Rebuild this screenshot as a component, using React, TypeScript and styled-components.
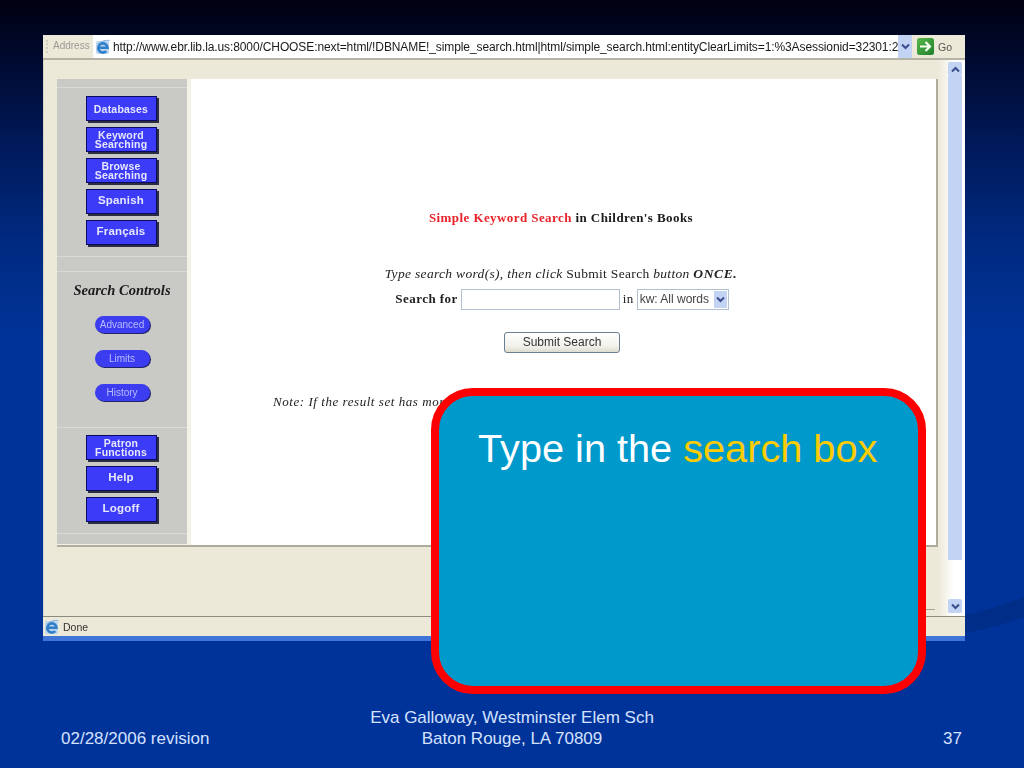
import React from 'react';
import styled, { createGlobalStyle } from 'styled-components';

const GlobalStyle = createGlobalStyle`
    html, body {
        margin: 0;
        padding: 0;
        background: #003399;
    }
`;

const Slide = styled.div`
    position: relative;
    width: 1024px;
    height: 768px;
    overflow: hidden;
    padding-top: 35px;
    box-sizing: border-box;
    background: linear-gradient(180deg, #000010 0px, #000a30 60px, #001a5c 150px, #002a80 240px, #003399 340px);
    font-family: 'Liberation Sans', Arial, sans-serif;
`;

const Swoosh = styled.svg`
    position: absolute;
    left: 965px;
    top: 590px;
`;

const Browser = styled.div`
    position: relative;
    display: flex;
    flex-direction: column;
    width: 922px;
    height: 606px;
    margin-left: 43px;
    filter: blur(0.35px);
`;

const AddressBar = styled.div`
    display: flex;
    align-items: stretch;
    height: 25px;
    background: #ece9d8;
    border-bottom: 2px solid #b5b3a6;
    box-sizing: border-box;
`;

const Grip = styled.div`
    width: 2px;
    margin: 5px 0 5px 3px;
    border-left: 2px dotted #d0cebf;
`;

const AddressLabel = styled.div`
    width: 43px;
    padding-left: 3px;
    box-sizing: border-box;
    font-size: 10px;
    line-height: 21px;
    color: #9a9a96;
`;

const UrlField = styled.div`
    display: flex;
    align-items: center;
    gap: 2px;
    width: 805px;
    padding-left: 2px;
    box-sizing: border-box;
    background: #ffffff;
    overflow: hidden;
`;

const UrlText = styled.span`
    flex: 1;
    overflow: hidden;
    white-space: nowrap;
    font-size: 12px;
    letter-spacing: -0.1px;
    color: #1a1a1a;
`;

const Arrow = styled.div<{ $w: number; $h: number }>`
    display: flex;
    align-items: center;
    justify-content: center;
    flex: none;
    width: ${p => p.$w}px;
    height: ${p => p.$h}px;
    background: #c3d3f4;
`;

const GoBlock = styled.div`
    display: flex;
    align-items: center;
    gap: 4px;
    padding-left: 5px;
    font-size: 10.5px;
    color: #55554f;
`;

const PageArea = styled.div`
    flex: 1;
    display: flex;
    background: #ece9d8;
    border-left: 1px solid #d8d5c4;
    min-height: 0;
`;

const FrameColumn = styled.div`
    display: flex;
    flex-direction: column;
    width: 894px;
    padding: 19px 0 6px 13px;
    box-sizing: border-box;
`;

const FrameRow = styled.div`
    display: flex;
    width: 881px;
    height: 468px;
    background: #f4f2e6;
    border-right: 2px solid #aeac9d;
    border-bottom: 2px solid #aeac9d;
    box-sizing: border-box;
`;

const BottomLine = styled.div`
    align-self: flex-end;
    width: 30px;
    height: 1px;
    margin: auto 3px 0 0;
    background: #a5a396;
`;

const NavPanel = styled.div`
    display: flex;
    flex-direction: column;
    width: 130px;
    height: 465px;
    background: #c9c9c5;
`;

const NavSection = styled.div<{ $h: number; $pad?: number }>`
    display: flex;
    flex-direction: column;
    align-items: center;
    flex: none;
    height: ${p => p.$h}px;
    padding-top: ${p => p.$pad || 0}px;
    box-sizing: border-box;
    border-bottom: 1px solid #dadad6;
`;

const NavButton = styled.div<{ $two?: boolean; $small?: boolean }>`
    display: flex;
    align-items: center;
    justify-content: center;
    flex: none;
    width: 71px;
    height: 25px;
    margin-bottom: 6px;
    margin-right: 2px;
    padding-bottom: ${p => (p.$two || p.$small ? 0 : 3)}px;
    text-align: center;
    box-sizing: border-box;
    background: #3c3cf8;
    border: 1px solid #0a0a60;
    box-shadow: 2px 2px 0 #2d2d40;
    color: #e6e6ff;
    font-weight: bold;
    font-size: ${p => (p.$two ? 10.5 : p.$small ? 10.5 : 11.5)}px;
    line-height: ${p => (p.$two ? 9 : 14)}px;
    letter-spacing: 0.2px;
`;

const ControlsTitle = styled.div`
    margin: 0 0 18px 0;
    font-family: 'Liberation Serif', 'Times New Roman', serif;
    font-weight: bold;
    font-style: italic;
    font-size: 14.5px;
    line-height: 16px;
    color: #1c1c1c;
`;

const Pill = styled.div`
    width: 55px;
    height: 17px;
    margin-bottom: 17px;
    border-radius: 9px;
    background: #3c3cf0;
    box-shadow: 1px 1px 0 #23236a;
    color: #b8bcff;
    font-size: 10px;
    line-height: 17px;
    text-align: center;
`;

const MainFrame = styled.div`
    flex: 1;
    margin-left: 4px;
    background: #ffffff;
    font-family: 'Liberation Serif', 'Times New Roman', serif;
    color: #222222;
`;

const Heading = styled.div`
    padding: 131px 5px 0 0;
    text-align: center;
    font-weight: bold;
    font-size: 13px;
    line-height: 16px;
    letter-spacing: 0.42px;
    color: #1a1a1a;
`;

const Red = styled.span`
    color: #e8232a;
`;

const Hint = styled.div`
    margin-top: 40px;
    padding-right: 5px;
    text-align: center;
    font-style: italic;
    font-size: 13.5px;
    line-height: 16px;
    letter-spacing: 0.32px;
    em {
        font-style: normal;
    }
    b {
        letter-spacing: 0.6px;
    }
`;

const SearchRow = styled.div`
    display: flex;
    align-items: center;
    justify-content: center;
    height: 22px;
    margin-top: 6px;
    padding-right: 3px;
    font-size: 13px;
    letter-spacing: 0.4px;
`;

const SearchLabel = styled.b`
    margin-right: 3px;
    letter-spacing: 0.45px;
`;

const SearchInput = styled.div`
    width: 159px;
    height: 21px;
    margin-right: 3px;
    box-sizing: border-box;
    border: 1px solid #b4c0d0;
`;

const SelectBox = styled.div`
    display: flex;
    align-items: center;
    justify-content: space-between;
    width: 92px;
    height: 21px;
    margin-left: 3px;
    padding: 0 1px 0 2px;
    box-sizing: border-box;
    border: 1px solid #b4c0d0;
    font-family: 'Liberation Sans', Arial, sans-serif;
    font-size: 12px;
    letter-spacing: 0;
    color: #444444;
`;

const SubmitButton = styled.div`
    width: 116px;
    height: 21px;
    margin: 22px 0 0 313px;
    box-sizing: border-box;
    border: 1px solid #6b7f92;
    border-radius: 3px;
    background: linear-gradient(180deg, #ffffff, #f2f1ea 70%, #dedcd0);
    font-family: 'Liberation Sans', Arial, sans-serif;
    font-size: 12px;
    line-height: 19px;
    text-align: center;
    color: #333333;
`;

const Note = styled.div`
    margin: 41px 0 0 82px;
    font-style: italic;
    font-size: 13px;
    line-height: 16px;
    letter-spacing: 0.55px;
    white-space: nowrap;
`;

const ScrollColumn = styled.div`
    flex: 1;
    display: flex;
    flex-direction: column;
    align-items: flex-start;
    padding: 2px 3px 3px 0;
    background: linear-gradient(90deg, #ece9d8 0, #ffffff 16px);
`;

const ScrollTrack = styled.div`
    width: 14px;
    height: 484px;
    margin: 0 0 auto 10px;
    background: #c3d3f4;
`;

const ScrollButton = styled(Arrow)`
    margin-left: 10px;
    border-radius: 2px;
`;

const StatusBar = styled.div`
    display: flex;
    align-items: center;
    gap: 3px;
    height: 20px;
    padding-left: 1px;
    background: #ece9d8;
    border-top: 1px solid #8e8c80;
    box-sizing: border-box;
    font-size: 10.5px;
    color: #33332e;
`;

const BlueStrip = styled.div`
    height: 5px;
    background: #3f74d8;
`;

const Callout = styled.div`
    position: absolute;
    left: 431px;
    top: 388px;
    width: 495px;
    height: 306px;
    padding: 31px 0 0 39px;
    box-sizing: border-box;
    border: 8px solid #ff0000;
    border-radius: 42px;
    background: #0099cc;
    color: #ffffff;
    font-size: 39.7px;
    line-height: 42px;
    white-space: nowrap;
`;

const Yellow = styled.span`
    color: #ffcc00;
`;

const Footer = styled.div`
    display: flex;
    align-items: flex-end;
    margin-top: 66px;
    color: #d5e2ff;
    font-size: 17px;
    line-height: 21px;
`;

const FooterDate = styled.div`
    width: 309px;
    padding-left: 61px;
    box-sizing: border-box;
`;

const FooterCenter = styled.div`
    width: 406px;
    text-align: center;
`;

const FooterPage = styled.div`
    flex: 1;
    padding-left: 228px;
`;

const IeIcon = ({ size }: { size: number }) => (
    <svg width={size} height={size} viewBox="0 0 16 16">
        <rect x="1" y="2" width="13" height="13" rx="2" fill="#bcd4ee" />
        <path d="M3.5 8.8h9a4.6 4.6 0 1 0-1.3 3.4" stroke="#2f7fc8" strokeWidth="2.6" fill="none" />
        <path d="M3 5C6 2 11 0.8 14.5 1.5" stroke="#7fb2e2" strokeWidth="1" fill="none" />
    </svg>
);

const Chevron = ({ up }: { up?: boolean }) => (
    <svg width="9" height="7" viewBox="0 0 9 7">
        <path
            d={up ? 'M1 5.5l3.5-3.5L8 5.5' : 'M1 1.5L4.5 5 8 1.5'}
            stroke="#3a4d8c"
            strokeWidth="2"
            fill="none"
        />
    </svg>
);

const GoIcon = () => (
    <svg width="17" height="17" viewBox="0 0 17 17">
        <defs>
            <linearGradient id="goFill" x1="0" y1="0" x2="1" y2="1">
                <stop offset="0" stopColor="#58b848" />
                <stop offset="1" stopColor="#1f7f2c" />
            </linearGradient>
        </defs>
        <rect width="17" height="17" rx="2.5" fill="url(#goFill)" />
        <path d="M3 8.5h9.5M8.5 4l4.5 4.5L8.5 13" stroke="#f4fff0" strokeWidth="2.2" fill="none" />
    </svg>
);

const url =
    'http://www.ebr.lib.la.us:8000/CHOOSE:next=html/!DBNAME!_simple_search.html|html/simple_search.html:entityClearLimits=1:%3Asessionid=32301:2';

const App = () => (
    <Slide>
        <GlobalStyle />
        <Swoosh width="59" height="50" viewBox="0 0 59 50">
            <path d="M0 25C20 21 40 14 59 7V27C40 33 20 40 0 43Z" fill="#002d88" />
        </Swoosh>
        <Browser>
            <AddressBar>
                <Grip />
                <AddressLabel>Address</AddressLabel>
                <UrlField>
                    <IeIcon size={16} />
                    <UrlText>{url}</UrlText>
                </UrlField>
                <Arrow $w={14} $h={23}>
                    <Chevron />
                </Arrow>
                <GoBlock>
                    <GoIcon />
                    Go
                </GoBlock>
            </AddressBar>
            <PageArea>
                <FrameColumn>
                    <FrameRow>
                        <NavPanel>
                            <NavSection $h={9} />
                            <NavSection $h={169} $pad={8}>
                                <NavButton $small>Databases</NavButton>
                                <NavButton $two>
                                    Keyword
                                    <br />
                                    Searching
                                </NavButton>
                                <NavButton $two>
                                    Browse
                                    <br />
                                    Searching
                                </NavButton>
                                <NavButton>Spanish</NavButton>
                                <NavButton>Français</NavButton>
                            </NavSection>
                            <NavSection $h={15} />
                            <NavSection $h={156} $pad={10}>
                                <ControlsTitle>Search Controls</ControlsTitle>
                                <Pill>Advanced</Pill>
                                <Pill>Limits</Pill>
                                <Pill>History</Pill>
                            </NavSection>
                            <NavSection $h={106} $pad={7}>
                                <NavButton $two>
                                    Patron
                                    <br />
                                    Functions
                                </NavButton>
                                <NavButton>Help</NavButton>
                                <NavButton>Logoff</NavButton>
                            </NavSection>
                        </NavPanel>
                        <MainFrame>
                            <Heading>
                                <Red>Simple Keyword Search</Red> in Children's Books
                            </Heading>
                            <Hint>
                                Type search word(s), then click <em>Submit Search</em> button <b>ONCE.</b>
                            </Hint>
                            <SearchRow>
                                <SearchLabel>Search for</SearchLabel>
                                <SearchInput />
                                in
                                <SelectBox>
                                    kw: All words
                                    <Arrow $w={13} $h={17}>
                                        <Chevron />
                                    </Arrow>
                                </SelectBox>
                            </SearchRow>
                            <SubmitButton>Submit Search</SubmitButton>
                            <Note>Note: If the result set has more</Note>
                        </MainFrame>
                    </FrameRow>
                    <BottomLine />
                </FrameColumn>
                <ScrollColumn>
                    <ScrollButton $w={14} $h={14}>
                        <Chevron up />
                    </ScrollButton>
                    <ScrollTrack />
                    <ScrollButton $w={14} $h={14}>
                        <Chevron />
                    </ScrollButton>
                </ScrollColumn>
            </PageArea>
            <StatusBar>
                <IeIcon size={16} />
                Done
            </StatusBar>
            <BlueStrip />
        </Browser>
        <Callout>
            Type in the <Yellow>search box</Yellow>
        </Callout>
        <Footer>
            <FooterDate>02/28/2006 revision</FooterDate>
            <FooterCenter>
                Eva Galloway, Westminster Elem Sch
                <br />
                Baton Rouge, LA 70809
            </FooterCenter>
            <FooterPage>37</FooterPage>
        </Footer>
    </Slide>
);

export default App;
